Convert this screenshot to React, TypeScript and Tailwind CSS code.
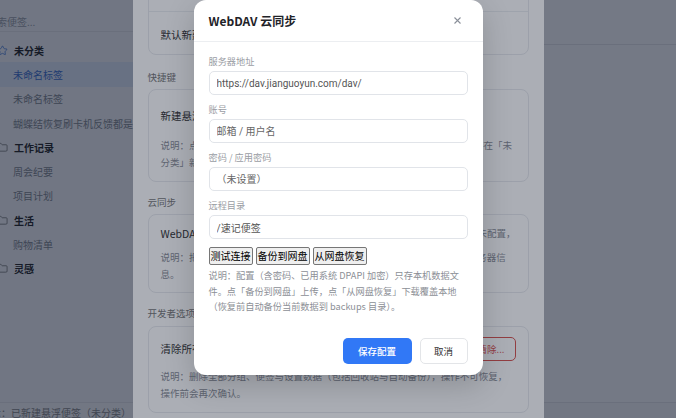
import { Folder, Star } from 'lucide-react';

interface SidebarGroup {
  name: string;
  starred?: boolean;
  items: string[];
}

const groups: SidebarGroup[] = [
  { name: '未分类', starred: true, items: ['未命名标签', '未命名标签', '蝴蝶结恢复刷卡机反馈都是是否成功'] },
  { name: '工作记录', items: ['周会纪要', '项目计划'] },
  { name: '生活', items: ['购物清单'] },
  { name: '灵感', items: [] },
];

const fields = [
  { label: '服务器地址', value: 'https://dav.jianguoyun.com/dav/', placeholder: '' },
  { label: '账号', value: '', placeholder: '邮箱 / 用户名' },
  { label: '密码 / 应用密码', value: '', placeholder: '（未设置）' },
  { label: '远程目录', value: '/速记便签', placeholder: '' },
];

function Sidebar() {
  return (
    <aside className="-ml-[14px] flex w-[170px] shrink-0 flex-col bg-[#f8f9fb]">
      <div className="h-[32px] border-b border-[#e6e8ec] pl-[1px] pt-[15px] text-[10px] leading-[14px] text-[#9ca0a8]">
        搜索便签...
      </div>
      <div className="mt-[6px]">
        {groups.map((group, groupIndex) => (
          <div key={group.name}>
            <div className="flex h-[24.3px] items-center gap-[6px] pl-[11px]">
              {group.starred ? (
                <Star size={11} strokeWidth={1.6} className="text-[#3b74d9]" />
              ) : (
                <Folder size={11} strokeWidth={1.6} className="text-[#666]" />
              )}
              <span className="text-[10px] font-bold text-[#222]">{group.name}</span>
            </div>
            {group.items.map((item, index) => {
              const active = groupIndex === 0 && index === 0;
              return (
                <div
                  key={`${item}-${index}`}
                  className={
                    active
                      ? 'flex h-[24.3px] items-center overflow-hidden whitespace-nowrap bg-[#e4ecfb] pl-[27px] text-[10px] text-[#3a6fd0]'
                      : 'flex h-[24.3px] items-center overflow-hidden whitespace-nowrap pl-[27px] text-[10px] text-[#82878f]'
                  }
                >
                  {item}
                </div>
              );
            })}
          </div>
        ))}
      </div>
    </aside>
  );
}

function SettingsPanel() {
  return (
    <div className="absolute inset-0 flex justify-center bg-[rgba(15,23,42,0.35)]">
      <div className="h-full w-[411px] overflow-hidden bg-white">
        <div className="-mt-[26px] px-[15px]">
          <div className="rounded-[8px] border border-[#e8eaee]">
            <div className="flex h-[36px] items-center px-[12px] text-[10.5px] text-[#333]">开机时自动启动</div>
            <div className="flex h-[43px] items-center border-t border-[#eceef1] px-[12px] pt-[3px] text-[10.5px] text-[#333]">
              默认新建便签的分类
            </div>
          </div>

          <div className="mt-[15px] text-[9.5px] leading-[14px] text-[#777]">快捷键</div>
          <div className="mt-[5px] rounded-[8px] border border-[#e8eaee] px-[12px] pb-[10px] pt-[17px]">
            <div className="h-[17px] text-[10.5px] leading-[17px] text-[#333]">新建悬浮便签</div>
            <div className="mt-[13px] whitespace-nowrap text-[9.5px] leading-[17px] text-[#8a8e96]">
              <div>说明：点击托盘菜单或按下全局快捷键可快速新建一张悬浮便签，便签默认存在「未</div>
              <div>分类」新建后可以在列表中拖动到其它分类。</div>
            </div>
          </div>

          <div className="mt-[13px] text-[9.5px] leading-[14px] text-[#777]">云同步</div>
          <div className="mt-[5px] rounded-[8px] border border-[#e8eaee] px-[12px] pb-[9px] pt-[10px]">
            <div className="flex h-[17px] items-center justify-between text-[10.5px] leading-[17px]">
              <span className="text-[#333]">WebDAV 云同步</span>
              <span className="text-[9.5px] text-[#8a8e96]">状态：未配置，</span>
            </div>
            <div className="mt-[7px] whitespace-nowrap text-[9.5px] leading-[17px] text-[#8a8e96]">
              <div>说明：把便签数据备份到坚果云等 WebDAV 网盘，请先点击「配置」填写服务器信</div>
              <div>息。</div>
            </div>
          </div>

          <div className="mt-[13px] text-[9.5px] leading-[14px] text-[#777]">开发者选项</div>
          <div className="mt-[6px] rounded-[8px] border border-[#e8eaee] px-[12px] pb-[10px] pt-[10px]">
            <div className="flex h-[24px] items-center justify-between">
              <span className="text-[10.5px] text-[#333]">清除所有数据</span>
              <button
                type="button"
                className="h-[24px] rounded-[5px] border border-[#d9534f] px-[10px] text-[9.5px] text-[#d9534f]"
              >
                全部清除...
              </button>
            </div>
            <div className="mt-[7px] whitespace-nowrap text-[9.5px] leading-[17px] text-[#8a8e96]">
              <div>说明：删除全部分组、便签与设置数据（包括回收站与自动备份），操作不可恢复，</div>
              <div>操作前会再次确认。</div>
            </div>
          </div>
        </div>
      </div>
    </div>
  );
}

function WebDavDialog() {
  return (
    <div className="absolute inset-0 flex justify-center bg-[rgba(15,23,42,0.35)]">
      <div className="h-fit w-[289px] rounded-[12px] bg-white shadow-[0_10px_30px_rgba(0,0,0,0.18)]">
        <div className="flex h-[42px] items-center justify-between border-b border-[#eceef1] px-[15px]">
          <h2 className="text-[12px] font-bold leading-none text-[#1f2329]">WebDAV 云同步</h2>
          <button type="button" className="mr-[7px] text-[#8a8f99]" aria-label="关闭">
            <svg width="7" height="7" viewBox="0 0 7 7" fill="none" stroke="currentColor" strokeWidth="1.1">
              <path d="M0.5 0.5L6.5 6.5M6.5 0.5L0.5 6.5" />
            </svg>
          </button>
        </div>

        <div className="px-[15px] pt-[13px]">
          {fields.map((field) => (
            <div key={field.label} className="mb-[8px]">
              <div className="h-[12px] text-[9.2px] leading-[12px] text-[#9a9da4]">{field.label}</div>
              <input
                readOnly
                defaultValue={field.value}
                placeholder={field.placeholder}
                className="mt-[4px] h-[24px] w-full rounded-[5px] border border-[#e1e4e9] px-[7px] font-['Roboto','Noto_Sans_CJK_SC',sans-serif] text-[10px] text-[#555] outline-none placeholder:text-[#666]"
              />
            </div>
          ))}

          <div className="flex h-[18px] gap-[3px]">
            {['测试连接', '备份到网盘', '从网盘恢复'].map((label) => (
              <button
                key={label}
                type="button"
                className="flex h-[18px] items-center rounded-[2px] border border-[#767676] bg-[#efefef] px-[1px] text-[10px] leading-[12px] text-black"
              >
                {label}
              </button>
            ))}
          </div>

          <p className="mt-[3px] text-[9.2px] leading-[15.5px] text-[#8c8f96]">
            说明：配置（含密码、已用系统 DPAPI 加密）只存本机数据文
            <br />
            件。点「备份到网盘」上传，点「从网盘恢复」下载覆盖本地
            <br />
            （恢复前自动备份当前数据到 backups 目录）。
          </p>
        </div>

        <div className="flex justify-end gap-[8px] px-[15px] pb-[11px] pt-[23.5px]">
          <button
            type="button"
            className="h-[26px] w-[69px] rounded-[5px] bg-[#3178f6] text-[9.5px] font-medium text-white"
          >
            保存配置
          </button>
          <button
            type="button"
            className="h-[26px] w-[48px] rounded-[5px] border border-[#e3e5e8] bg-white text-[9.5px] text-[#333]"
          >
            取消
          </button>
        </div>
      </div>
    </div>
  );
}

export default function App() {
  return (
    <div className="relative h-[418px] w-[676px] overflow-hidden bg-white font-['Noto_Sans_CJK_SC',sans-serif]">
      <div className="flex h-full flex-col">
        <div className="flex min-h-0 flex-1">
          <Sidebar />
          <main className="flex-1 border-l border-[#e6e8ec]">
            <div className="h-[45px] border-b border-[#e6e8ec]" />
          </main>
        </div>
        <footer className="-ml-[19px] h-[16px] shrink-0 whitespace-nowrap border-t border-[#e6e8ec] bg-[#fafafa] pt-[1px] text-[10px] leading-[17px] text-[#888]">
          提示：已新建悬浮便签（未分类）
        </footer>
      </div>
      <SettingsPanel />
      <WebDavDialog />
    </div>
  );
}
